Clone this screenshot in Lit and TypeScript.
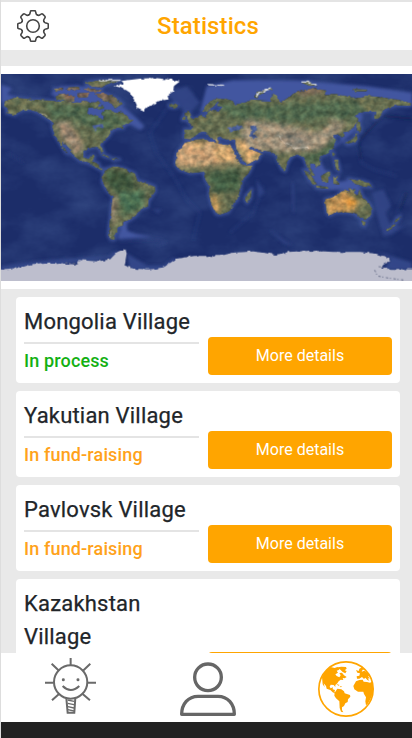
import { LitElement, html, svg, css } from "lit";
import { customElement, property } from "lit/decorators.js";

type Village = { name: string; status: string; tone: "green" | "orange" };

const VILLAGES: Village[] = [
  { name: "Mongolia Village", status: "In process", tone: "green" },
  { name: "Yakutian Village", status: "In fund-raising", tone: "orange" },
  { name: "Pavlovsk Village", status: "In fund-raising", tone: "orange" },
  { name: "Kazakhstan Village", status: "In fund-raising", tone: "orange" },
];

const LAND = [
  // North and Central America
  "M15 105L45 94 100 100 150 103 180 107 215 106 240 110 258 104 275 112 292 104 300 112 288 124 265 126 262 140 280 148 300 156 310 162 312 150 306 138 318 130 335 134 345 140 358 136 366 142 385 150 398 164 385 174 365 174 372 186 350 186 335 196 325 212 312 224 300 236 311 256 304 260 292 243 264 246 250 256 250 274 266 278 274 268 284 270 278 286 296 292 298 304 312 310 304 313 286 303 265 292 240 284 216 266 206 246 190 226 186 230 204 264 196 258 180 232 164 206 157 185 158 168 142 158 120 143 95 132 70 132 42 147 18 141 24 132 10 120z",
  // Canadian islands
  "M168 86L188 82 222 92 224 104 195 108 172 100zM160 68L190 66 186 74 168 75zM196 64L236 62 240 70 205 74zM256 50L300 42 360 42 330 52 298 64 270 62zM286 82L320 84 352 98 370 114 360 118 345 128 335 114 318 106 300 96zM228 82L268 80 262 94 238 94zM250 68L308 70 300 77 262 78zM288 124L308 120 312 128 296 131z",
  // Caribbean
  "M302 262L330 272 324 275 306 268zM333 276L360 280 340 283zM506 118L526 112 536 118 524 125 510 123z",
  // South America
  "M312 310L345 300 370 306 405 322 412 342 440 352 465 362 466 376 446 404 444 422 420 430 408 448 390 462 370 466 368 480 352 484 352 500 346 505 344 521 332 520 325 508 328 476 334 430 338 392 318 370 306 348z",
  // Europe and Asia
  "M553 190L580 190 578 180 564 168 590 156 606 146 618 152 624 136 640 134 656 136 668 122 650 120 658 106 640 122 622 138 606 134 616 118 640 100 668 95 698 104 705 116 740 108 750 100 778 102 812 104 816 84 832 90 840 106 866 96 880 82 920 70 948 66 978 74 974 84 1010 84 1060 94 1100 88 1160 96 1200 102 1236 112 1226 120 1190 118 1164 126 1146 140 1136 158 1120 156 1126 138 1100 136 1078 140 1060 150 1076 160 1066 180 1046 196 1034 198 1032 212 1024 214 1016 204 1000 208 1008 222 1002 240 984 262 966 268 958 278 962 296 950 306 944 294 930 290 932 310 946 330 936 330 920 300 910 274 888 264 870 278 860 298 856 316 846 310 832 282 830 268 812 256 786 254 752 242 746 248 784 262 774 282 740 296 728 286 708 246 706 222 676 220 660 212 650 216 658 228 648 234 632 210 616 198 604 198 588 206 570 220 552 218zM552 142L566 136 574 156 586 162 566 166zM548 152L556 150 558 162 546 162z",
  // Novaya Zemlya, Severnaya Zemlya and the northern islands
  "M762 94L776 76 818 64 816 70 782 82 772 98zM904 50L926 46 954 58 928 60zM1056 68L1102 70 1100 76 1068 76z",
  // Africa
  "M555 230L590 220 610 218 620 224 650 232 690 238 700 252 718 288 728 300 758 298 746 322 724 344 722 368 712 402 698 418 686 438 660 446 648 444 634 416 626 382 630 364 616 342 610 318 570 322 540 312 525 292 530 262zM738 388L756 368 752 396 742 412 734 402z",
  // Japan and east Asian islands
  "M1072 166L1080 168 1084 190 1080 200 1070 196zM1034 230L1056 222 1068 204 1074 218 1066 230 1044 236zM996 258L1004 262 998 272zM1002 282L1012 280 1020 316 1008 310z",
  // Indonesia and New Guinea
  "M910 310L930 322 950 352 944 358 926 340zM946 358L984 362 982 368 950 366zM962 330L984 316 992 322 984 350 966 346zM1000 332L1016 330 1008 342 1016 356 1000 354zM1044 338L1070 342 1104 350 1116 364 1090 362 1064 352z",
  // Australia, Tasmania and New Zealand
  "M975 400L1010 390 1022 378 1036 374 1046 380 1046 366 1068 370 1062 380 1072 388 1078 370 1088 392 1108 412 1116 426 1112 450 1096 462 1074 452 1060 442 1030 438 1004 440 990 448 980 440zM1084 466L1098 468 1094 480 1086 476zM1190 456L1202 450 1192 466 1182 470zM1160 492L1184 472 1186 478 1166 496z",
];

const ANTARCTICA =
  "M-20 612L60 606 90 596 130 590 170 590 226 596 234 582 290 586 330 580 352 558 376 548 380 562 374 598 400 608 450 610 490 604 530 578 580 570 660 570 700 560 760 556 830 566 866 558 930 554 1000 558 1080 558 1130 564 1168 576 1170 586 1150 596 1144 608 1260 610V680H-20z";

const worldMap = svg`
  <defs>
    <filter id="coast" x="0" y="0" width="100%" height="100%" color-interpolation-filters="sRGB">
      <feTurbulence type="fractalNoise" baseFrequency=".05" numOctaves="3" seed="4" result="n"/>
      <feDisplacementMap in="SourceGraphic" in2="n" scale="10" xChannelSelector="R" yChannelSelector="G" result="d"/>
      <feTurbulence type="fractalNoise" baseFrequency=".05 .06" numOctaves="4" seed="9" result="t"/>
      <feColorMatrix in="t" type="matrix" values="1.1 0 0 0 -.05  .9 .2 0 0 -.05  .8 .3 0 0 -.05  0 0 0 0 1" result="c"/>
      <feComposite in="d" in2="c" operator="arithmetic" k1=".8" k2=".58" k3="0" k4="0" result="m"/>
      <feComposite in="m" in2="d" operator="in"/>
    </filter>
    <filter id="ice" x="-5%" y="-5%" width="110%" height="110%" color-interpolation-filters="sRGB">
      <feTurbulence type="fractalNoise" baseFrequency=".05" numOctaves="3" seed="7"/>
      <feDisplacementMap in="SourceGraphic" scale="12" xChannelSelector="R" yChannelSelector="G"/>
    </filter>
    <filter id="sea" x="0" y="0" width="100%" height="100%">
      <feTurbulence type="fractalNoise" baseFrequency=".007 .011" numOctaves="5" seed="12"/>
      <feColorMatrix type="matrix" values="0 0 0 0 .1 0 0 0 0 .18 0 0 0 0 .42 2 0 0 0 -.7"/>
    </filter>
    <filter id="soft"><feGaussianBlur stdDeviation="4"/></filter>
    <filter id="blend"><feGaussianBlur stdDeviation="8"/></filter>
    <clipPath id="land">${LAND.map((d) => svg`<path d=${d} />`)}</clipPath>
  </defs>
  <rect x="3" y="24" width="1233" height="621" fill="#1c2d69"/>
  <rect x="3" y="24" width="1233" height="621" filter="url(#sea)" opacity=".3"/>
  <g filter="url(#soft)">
    <g fill="#43589d" stroke="#3d5297" stroke-width="9" stroke-linejoin="round">
      ${LAND.map((d) => svg`<path d=${d} />`)}
    </g>
    <path fill="#4356a0" d="M620 60L700 42 900 44 1100 60 1236 80V122L1110 104 1060 128 960 80 820 110 640 110 600 140zM3 56L36 66 22 84 50 92 10 110 3 110zM150 84L180 60 260 60 330 90 380 130 410 156 434 182 420 192 390 176 350 190 250 160 200 106zM368 470L405 440 380 474 382 494 410 504 460 512 352 520zM1030 212L1060 130 1090 150 1060 200 1000 250zM920 290L960 285 1000 350 1060 340 1090 380 1040 370 990 372 930 340z"/>
    <path fill="#3a4d90" opacity=".8" d="M380 562L400 574 440 598 490 598 520 576 540 580 480 616 390 612zM3 600L90 588 170 580 320 572 350 554 352 572 230 590 3 616zM1130 556L1236 590V612H1150L1172 580z"/>
    <path fill="#33478a" d="M1116 380L1150 370 1174 420 1156 440 1172 480 1216 478 1176 506 1150 512 1132 450zM806 490L880 540 850 532zM876 350L882 352 882 440 878 440zM490 80L560 60 600 110 560 150 540 120zM456 430L484 430 476 442zM770 340L794 380 774 396z" opacity=".8"/>
    <path fill="none" stroke="#2d4182" stroke-width="6" d="M500 130L450 200 470 260 520 330 560 400 600 440 580 520M690 500L760 440 790 360M1070 230L1084 290 1120 310 1190 330M1216 380L1190 440M20 260L70 290M360 526L480 518 496 530 470 540" opacity=".5"/>
    <path fill="none" stroke="#13204f" stroke-width="6" d="M1146 152L1110 190 1076 226 1082 280M1220 380L1200 430M1150 150L1236 158" opacity=".8"/>
  </g>
  <g filter="url(#coast)">
    <g fill="#697052">${LAND.map((d) => svg`<path d=${d} />`)}</g>
    <g clip-path="url(#land)">
      <g filter="url(#blend)">
        <path fill="#526b4f" d="M130 110L320 125 400 170 300 200 220 160 170 180zM640 110L820 120 1060 100 1120 160 980 160 850 170 700 160zM980 210L1030 200 990 270 930 300 900 280z"/>
        <path fill="#3f573e" d="M318 306L400 326 400 370 340 376 316 344z"/>
        <path fill="#4b7052" d="M350 380L430 370 430 420 370 450z"/>
        <path fill="#988570" d="M165 170L205 166 245 225 245 260 225 260 190 225zM325 400L350 390 346 460 334 480z"/>
        <path fill="#c9a277" d="M520 224L700 226 722 288 630 298 530 304z"/>
        <path fill="#d3a86f" d="M640 236L694 240 706 286 650 284zM702 216L784 250 780 284 740 298zM560 232L620 226 600 250z"/>
        <path fill="#a2937c" d="M740 160L870 180 950 200 1000 170 980 150 1040 180 960 250 880 260 750 250 720 210z"/>
        <path fill="#8c8476" d="M836 204L890 196 936 230 910 250 860 242z"/>
        <path fill="#445f44" d="M615 322L720 310 720 370 650 384z"/>
        <path fill="#bd9154" d="M970 386L1040 372 1080 410 1050 446 980 450zM630 390L655 390 660 440 640 440z"/>
        <path fill="#e39a38" d="M1036 396L1068 400 1062 420 1040 418z"/>
        <path fill="#84695a" d="M160 64L310 66 360 116 300 96 200 104zM888 70L970 66 960 82 900 86z"/>
      </g>
      <path fill="none" stroke="#d5cec2" stroke-width="2.5" opacity=".7" d="M836 208L854 232 884 246 926 244M80 130L136 146 156 168M334 490L330 516"/>
    </g>
    <path fill="#4c6096" d="M750 180L764 178 768 192 762 202 772 214 762 220 750 206 754 194zM682 184L724 178 726 188 718 192 700 194 688 200zM700 246L708 248 732 290 722 286zM276 178L308 174 312 188 290 182 284 196z"/>
  </g>
  <g filter="url(#ice)">
    <path fill="#fff" d="M340 60L372 52 364 45 420 38 464 36 506 40 540 46 522 60 520 76 502 88 506 100 480 104 462 114 444 122 432 134 414 126 406 108 398 94 390 80 368 66z"/>
    <path fill="none" stroke="#d5d9e4" stroke-width="4" d="M622 56L672 58M904 48L922 48 950 57M768 94L778 78 812 68M300 44L362 43"/>
    <path fill="#bdbecd" d=${ANTARCTICA} />
  </g>
  <path fill="none" stroke="#69708b" stroke-width="3" stroke-dasharray="7 5 3 8" d="M1124 612L1132 630 1164 636 1210 642M1136 602L1158 604M196 590L234 594"/>
`;

const TOOTH =
  "M-4.5-10.9Q-3.2-11.4-3-12.7L-2.7-14.1Q-2.5-15.3-1.5-15.3H1.5Q2.5-15.3 2.7-14.1L3-12.7Q3.2-11.4 4.5-10.9";

const gearIcon = html`<svg class="gear" viewBox="-16 -16 32 32" fill="none" stroke="#444" stroke-width="1.6">
  ${[0, 45, 90, 135, 180, 225, 270, 315].map(
    (a) => svg`<path d=${TOOTH} transform="rotate(${a})" stroke-linecap="round" />`
  )}
  <circle r="6.3" />
</svg>`;

const bulbIcon = html`<svg class="bulb" viewBox="135 294 154 168" fill="none" stroke="#6a6a6a" stroke-width="6">
  <circle cx="212" cy="366" r="50" />
  <path d="M212 294V315M135 368H161M263 368H289M155 311L177 332M271 311L249 332M156 421L177 402M270 421L248 402" />
  <path d="M188 378Q212 402 238 378" />
  <g fill="#6a6a6a" stroke="none"><circle cx="190" cy="359" r="4.5" /><circle cx="234" cy="359" r="4.5" /></g>
  <path stroke-width="6" d="M199 414L203 458H223L226 414" />
  <path stroke-width="4" d="M203 420L222 424M203 430L222 434M204 440L222 444M204 449L222 453" />
</svg>`;

const personIcon = html`<svg class="icon" viewBox="540 303 168 168" fill="none" stroke="#666" stroke-width="10" stroke-linejoin="round">
  <circle cx="624" cy="352" r="40" />
  <path d="M545 463C545 432 565 409 594 409H654C683 409 703 432 703 463Z" />
</svg>`;

const globeIcon = html`<svg class="icon" viewBox="954 303 168 168" fill="#ffa500">
  <circle cx="1038" cy="387" r="81.5" fill="none" stroke="#ffa500" stroke-width="5" />
  <path d="M966 352L974 336 992 321 1004 324 1012 321 1022 324 1016 330 1010 332 1014 338 1006 343 1010 348 1018 352 1022 346 1018 339 1026 338 1032 346 1040 351 1034 355 1028 354 1030 360 1022 359 1016 364 1012 370 1006 375 1006 381 1001 375 992 374 989 380 992 385 999 382 998 388 1005 390 1003 397 1012 400 1008 402 998 397 991 390 980 386 978 378 971 370 974 382 968 373z" />
  <path d="M1014 322L1024 320 1038 321 1040 326 1034 331 1040 333 1036 340 1028 336 1022 330zM1009 372L1019 375 1015 377zM1019 378L1027 380 1022 382z" />
  <path d="M1004 398L1012 386 1024 388 1032 394 1034 400 1050 405 1051 410 1044 418 1043 426 1036 430 1032 438 1026 442 1026 450 1030 457 1023 455 1019 444 1018 424 1008 415 1003 407z" />
  <path d="M1070 349L1078 347 1080 340 1072 338 1068 330 1076 333 1078 326 1086 322 1094 328 1088 329 1085 335 1093 332 1103 339 1111 350 1104 348 1109 356 1103 355 1108 362 1102 360 1096 353 1092 357 1086 351 1078 356 1071 356z" />
  <path d="M1068 364L1078 360 1088 359 1091 365 1101 366 1110 368 1116 365 1119 380 1119 398 1112 416 1103 432 1098 436 1096 424 1098 412 1092 402 1090 395 1074 395 1063 388 1060 378z" />
</svg>`;

@customElement("village-card")
class VillageCard extends LitElement {
  @property({ attribute: false }) village!: Village;

  static styles = css`
    :host {
      display: grid;
      grid-template-columns: 175px 184px;
      column-gap: 9px;
      align-items: end;
      padding: 8px;
      border-radius: 4px;
      background: #fff;
    }
    .name {
      padding-bottom: 4px;
      border-bottom: 2px solid #e4e4e4;
      font-size: 22px;
      line-height: 33px;
      font-weight: 400;
      letter-spacing: 0.2px;
      -webkit-text-stroke: 0.25px currentColor;
      margin: 0;
    }
    .status {
      margin: 3px 0 1px;
      font-size: 18px;
      line-height: 27px;
      font-weight: 500;
      letter-spacing: 0.14px;
    }
    .green { color: #13b013; }
    .orange { color: #ffa21a; }
    .more {
      height: 38px;
      border: 0;
      border-radius: 4px;
      background: #ffa500;
      color: #fff;
      font: 400 16px/24px Roboto, sans-serif;
      padding: 6px 12px;
    }
  `;

  render() {
    const { name, status, tone } = this.village;
    return html`
      <div>
        <h2 class="name">${name}</h2>
        <div class="status ${tone}">${status}</div>
      </div>
      <button class="more">More details</button>
    `;
  }
}

@customElement("app-root")
class AppRoot extends LitElement {
  static styles = css`
    :host {
      display: flex;
      flex-direction: column;
      box-sizing: border-box;
      height: 738px;
      overflow: hidden;
      border-left: 1px solid #ddd;
      background: #e9e9e9;
      color: #212529;
      font-family: Roboto, sans-serif;
    }
    .header {
      flex: none;
      box-sizing: border-box;
      height: 50px;
      display: grid;
      grid-template-columns: 32px 1fr 32px;
      align-items: center;
      padding: 0 13px 0 16px;
      border-top: 2px solid #e4e4e4;
      background: #fff;
    }
    .gear { display: block; width: 32px; height: 32px; }
    .title {
      margin: 0;
      text-align: center;
      color: #ffa500;
      font-size: 24px;
      line-height: 36px;
      font-weight: 500;
      letter-spacing: 0.1px;
    }
    .content {
      flex: 1;
      min-height: 0;
      overflow: hidden;
      padding-top: 16px;
    }
    .map-band { padding: 8px 0; background: #fff; }
    .map { display: block; width: 411px; height: 207px; }
    .list {
      display: flex;
      flex-direction: column;
      gap: 8px;
      padding: 8px 12px 8px 15px;
    }
    .nav {
      flex: none;
      display: grid;
      grid-template-columns: repeat(3, 137.5px);
      justify-items: center;
      align-items: center;
      box-sizing: border-box;
      height: 69px;
      padding: 0 0 1px 1px;
      background: #fff;
    }
    .icon { display: block; width: 56px; height: 56px; margin-top: 4px; }
    .bulb { display: block; width: 51.3px; height: 56px; margin-bottom: 2px; }
    .system { flex: none; height: 16px; background: #222; }
  `;

  render() {
    return html`
      <header class="header">
        ${gearIcon}
        <h1 class="title">Statistics</h1>
      </header>
      <main class="content">
        <div class="map-band">
          <svg class="map" viewBox="3 24 1233 621" preserveAspectRatio="none">${worldMap}</svg>
        </div>
        <div class="list">
          ${VILLAGES.map((v) => html`<village-card .village=${v}></village-card>`)}
        </div>
      </main>
      <nav class="nav">${bulbIcon}${personIcon}${globeIcon}</nav>
      <div class="system"></div>
    `;
  }
}
